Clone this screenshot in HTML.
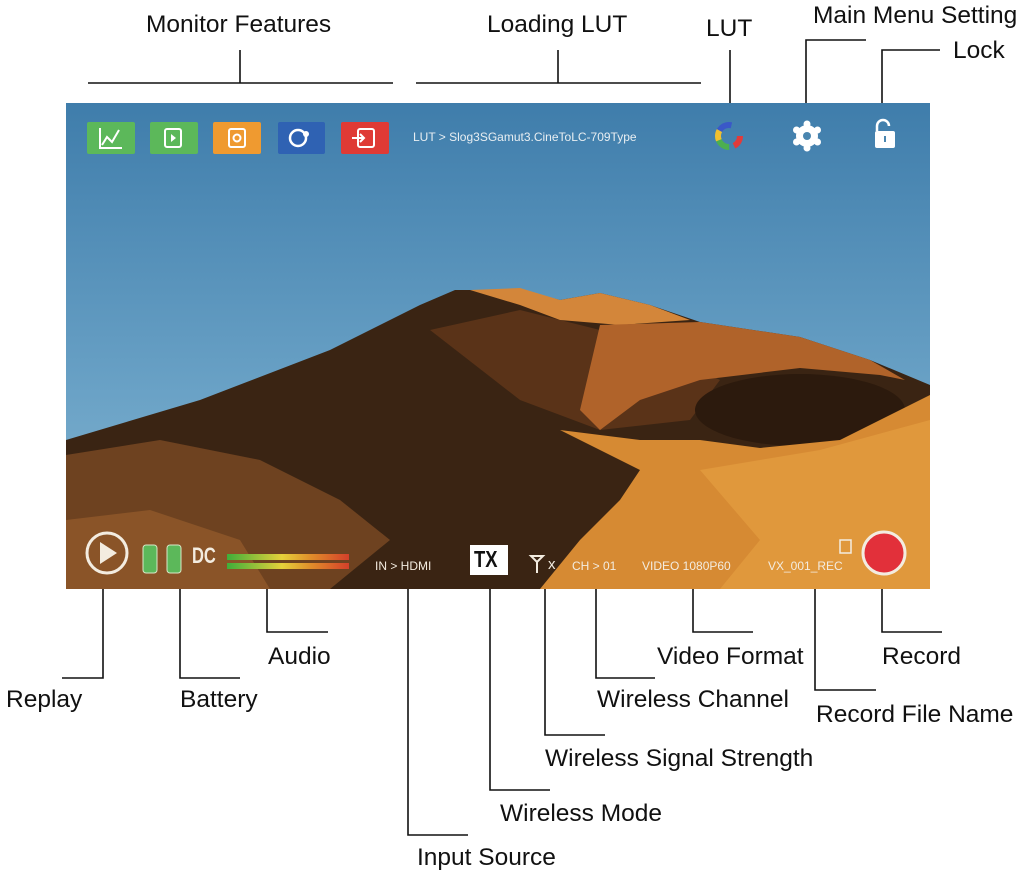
<!DOCTYPE html>
<html><head><meta charset="utf-8"><style>
html,body{margin:0;padding:0;background:#fff;}
body{width:1034px;height:876px;position:relative;overflow:hidden;font-family:"Liberation Sans",sans-serif;}
.t{position:absolute;font-size:24.5px;color:#111;white-space:nowrap;line-height:1;}
</style></head><body>
<svg width="1034" height="876" style="position:absolute;left:0;top:0">
<defs>
<linearGradient id="sky" x1="0" y1="0" x2="0" y2="1">
<stop offset="0" stop-color="#3f7dab"/><stop offset="0.6" stop-color="#6aa2c6"/><stop offset="1" stop-color="#8dbad2"/>
</linearGradient>
<linearGradient id="meter" x1="0" x2="1">
<stop offset="0" stop-color="#3fae3a"/><stop offset="0.45" stop-color="#e6d13a"/><stop offset="0.7" stop-color="#e08a2a"/><stop offset="1" stop-color="#d3402a"/>
</linearGradient>
</defs>
<rect x="66" y="103" width="864" height="486" fill="url(#sky)"/>
<polygon fill="#3a2413" points="66,440 200,400 330,350 420,305 455,290 520,290 560,300 600,293 650,305 700,322 800,337 870,360 930,385 930,589 66,589"/>
<polygon fill="#6e4220" points="66,455 160,440 260,460 340,500 390,540 330,589 66,589"/>
<polygon fill="#8a5428" points="66,520 150,510 240,540 270,589 66,589"/>
<polygon fill="#5a3318" points="430,330 520,310 640,340 720,380 690,420 600,430 520,400"/>
<polygon fill="#d3863a" points="470,290 520,288 560,300 600,293 650,305 690,320 620,325 560,320 520,305"/>
<polygon fill="#b0632a" points="600,325 700,322 800,337 870,360 905,380 880,375 800,368 700,380 640,400 600,430 580,410"/>
<ellipse cx="800" cy="410" rx="105" ry="36" fill="#2c1a0d"/>
<polygon fill="#d68a33" points="560,430 640,440 700,440 760,448 840,440 900,410 930,395 930,589 540,589 580,540 620,500 640,470 600,450"/>
<polygon fill="#e0983c" points="700,470 820,450 930,420 930,589 720,589 760,540"/>
<rect x="87" y="122" width="48" height="32" rx="2" fill="#5cb85a"/>
<path d="M100 128v20h22M102 145l5-8 5 5 7-12" stroke="#fff" stroke-width="2" fill="none"/>
<rect x="150" y="122" width="48" height="32" rx="2" fill="#5cb85a"/>
<rect x="165" y="129" width="16" height="18" rx="2" stroke="#fff" stroke-width="2" fill="none"/><path d="M171 134l5 4-5 4z" fill="#fff"/>
<rect x="213" y="122" width="48" height="32" rx="2" fill="#ef9a30"/>
<rect x="229" y="129" width="16" height="18" rx="2" stroke="#fff" stroke-width="2" fill="none"/><circle cx="237" cy="138" r="3.5" stroke="#fff" stroke-width="2" fill="none"/>
<rect x="278" y="122" width="47" height="32" rx="2" fill="#2f62b3"/>
<circle cx="298" cy="138" r="8" stroke="#fff" stroke-width="2.5" fill="none"/><circle cx="306" cy="134" r="3" fill="#fff"/>
<rect x="341" y="122" width="48" height="32" rx="2" fill="#df3a35"/>
<rect x="358" y="129" width="16" height="18" rx="2" stroke="#fff" stroke-width="2" fill="none"/><path d="M352 138h12M360 134l4 4-4 4" stroke="#fff" stroke-width="2" fill="none"/>
<circle cx="729" cy="136" r="11" fill="none" stroke="#e23b3b" stroke-width="6" stroke-dasharray="12 60"/>
<circle cx="729" cy="136" r="11" fill="none" stroke="#4caf50" stroke-width="6" stroke-dasharray="0 17 17 60"/>
<circle cx="729" cy="136" r="11" fill="none" stroke="#3a58c8" stroke-width="6" stroke-dasharray="0 40 14 60"/>
<circle cx="729" cy="136" r="11" fill="none" stroke="#f0c030" stroke-width="6" stroke-dasharray="0 30 10 60"/>
<circle cx="807" cy="136" r="11" fill="#fff"/>
<g fill="#fff"><circle cx="807" cy="124" r="3.5"/><circle cx="807" cy="148" r="3.5"/><circle cx="796.5" cy="130" r="3.5"/><circle cx="817.5" cy="130" r="3.5"/><circle cx="796.5" cy="142" r="3.5"/><circle cx="817.5" cy="142" r="3.5"/></g>
<circle cx="807" cy="136" r="4" fill="#4a86b0"/>
<path d="M877 131v-5a6 6 0 0 1 12 0" stroke="#fff" stroke-width="2.5" fill="none"/>
<rect x="875" y="131" width="20" height="17" rx="2" fill="#fff"/><rect x="884" y="136" width="2" height="6" fill="#4a86b0"/>
<circle cx="107" cy="553" r="20" stroke="#f3ece0" stroke-width="3" fill="none"/>
<path d="M100 542v22l17-11z" fill="#f3ece0"/>
<rect x="143" y="545" width="14" height="28" rx="3" fill="#5cb85a" stroke="#d8e8c8" stroke-width="1"/>
<rect x="167" y="545" width="14" height="28" rx="3" fill="#5cb85a" stroke="#d8e8c8" stroke-width="1"/>
<rect x="227" y="554" width="122" height="6" fill="url(#meter)"/>
<rect x="227" y="563" width="122" height="6" fill="url(#meter)"/>
<rect x="470" y="545" width="38" height="30" fill="#fff"/>
<path d="M531 556h12l-6 6zM537 562v11" stroke="#f3ece0" stroke-width="2" fill="none"/>
<rect x="840" y="540" width="11" height="13" fill="none" stroke="#f3ece0" stroke-width="1.5"/>
<circle cx="884" cy="553" r="21" fill="#e2303a" stroke="#f3ece0" stroke-width="3"/>
<g stroke="#111" stroke-width="1.6" fill="none">
<path d="M88 83H393M240 50V83"/>
<path d="M416 83H701M558 50V83"/>
<path d="M730 50V103"/>
<path d="M806 103V40H866"/>
<path d="M882 103V50H940"/>
<path d="M103 589V678H62"/>
<path d="M180 589V678H240"/>
<path d="M267 589V632H328"/>
<path d="M408 589V835H468"/>
<path d="M490 589V790H550"/>
<path d="M545 589V735H605"/>
<path d="M596 589V678H655"/>
<path d="M693 589V632H753"/>
<path d="M815 589V690H876"/>
<path d="M882 589V632H942"/>
</g>
</svg>
<div class="t" style="left:413px;top:131px;font-size:12px;color:#e8eef2">LUT &gt; Slog3SGamut3.CineToLC-709Type</div>
<div class="t" style="left:192px;top:545px;font-size:22px;font-weight:bold;color:#f3ece0;transform:scaleX(0.75);transform-origin:left">DC</div>
<div class="t" style="left:375px;top:560px;font-size:12px;color:#f3ece0">IN &gt; HDMI</div>
<div class="t" style="left:474px;top:548px;font-size:23px;font-weight:bold;color:#111;transform:scaleX(0.8);transform-origin:left">TX</div>
<div class="t" style="left:548px;top:557px;font-size:15px;color:#f3ece0">x</div>
<div class="t" style="left:572px;top:560px;font-size:12px;color:#f3ece0">CH &gt; 01</div>
<div class="t" style="left:642px;top:560px;font-size:12px;color:#f3ece0">VIDEO 1080P60</div>
<div class="t" style="left:768px;top:560px;font-size:12px;color:#f3ece0">VX_001_REC</div>
<div class="t" style="left:146px;top:13px">Monitor Features</div>
<div class="t" style="left:487px;top:13px">Loading LUT</div>
<div class="t" style="left:706px;top:17px">LUT</div>
<div class="t" style="left:813px;top:4px">Main Menu Setting</div>
<div class="t" style="left:953px;top:39px">Lock</div>
<div class="t" style="left:6px;top:688px">Replay</div>
<div class="t" style="left:180px;top:688px">Battery</div>
<div class="t" style="left:268px;top:645px">Audio</div>
<div class="t" style="left:417px;top:846px">Input Source</div>
<div class="t" style="left:500px;top:802px">Wireless Mode</div>
<div class="t" style="left:545px;top:747px">Wireless Signal Strength</div>
<div class="t" style="left:597px;top:688px">Wireless Channel</div>
<div class="t" style="left:657px;top:645px">Video Format</div>
<div class="t" style="left:816px;top:703px">Record File Name</div>
<div class="t" style="left:882px;top:645px">Record</div>
</body></html>
